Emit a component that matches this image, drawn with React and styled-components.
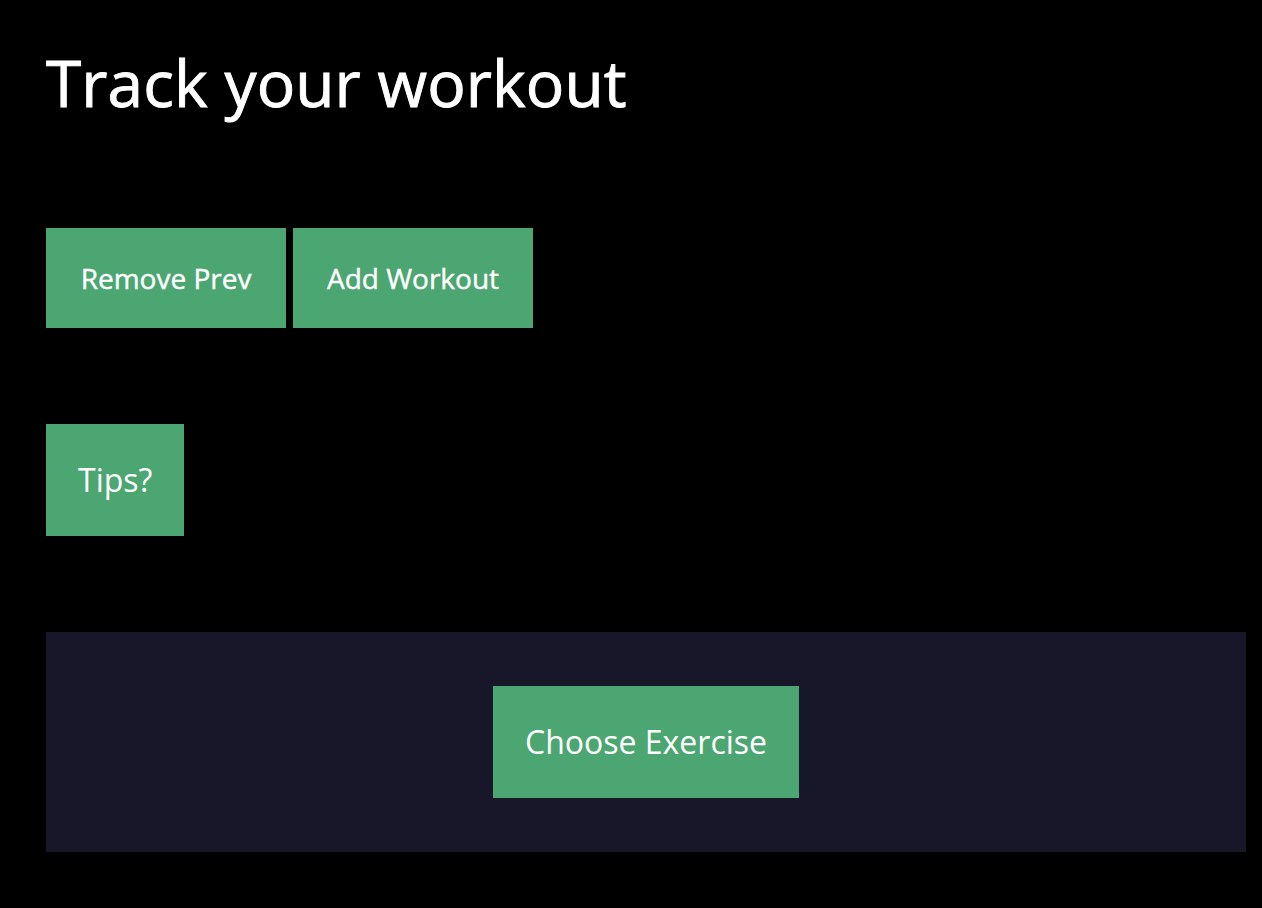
import React from 'react';
import styled, { createGlobalStyle } from 'styled-components';

const GlobalStyle = createGlobalStyle`
  html, body {
    margin: 0;
    padding: 0;
    background: #000;
  }
  body {
    font-family: "Open Sans", "Liberation Sans", sans-serif;
    color: #fff;
  }
`;

export default function App() {
  return (
    <>
      <GlobalStyle />
      <Page>
        <Title>Track your workout</Title>
        <ButtonRow>
          <RowButton>Remove Prev</RowButton>
          <RowButton>Add Workout</RowButton>
        </ButtonRow>
        <BigButton>Tips?</BigButton>
        <ExercisePanel>
          <BigButton>Choose Exercise</BigButton>
        </ExercisePanel>
      </Page>
    </>
  );
}

const Page = styled.div`
  min-height: 908px;
  box-sizing: border-box;
  padding: 39px 16px 40px 46px;
  display: flex;
  flex-direction: column;
  align-items: flex-start;
  gap: 96px;
`;

const Title = styled.h1`
  margin: 0 0 5px;
  font-size: 64px;
  line-height: 88px;
  font-weight: 400;
  letter-spacing: 0.1px;
  -webkit-text-stroke: 0.9px #fff;
`;

const ButtonRow = styled.div`
  display: flex;
  gap: 7px;
`;

const Button = styled.button`
  border: none;
  border-radius: 0;
  background: #4ca672;
  color: #fff;
  font-family: "Open Sans", "Liberation Sans", sans-serif;
  cursor: pointer;
`;

const RowButton = styled(Button)`
  width: 240px;
  height: 100px;
  font-size: 28px;
  padding: 0;
  -webkit-text-stroke: 0.4px #fff;
`;

const BigButton = styled(Button)`
  font-size: 32px;
  line-height: 48px;
  padding: 32px;
`;

const ExercisePanel = styled.div`
  width: 1200px;
  height: 220px;
  background: #181729;
  display: flex;
  align-items: center;
  justify-content: center;
`;
